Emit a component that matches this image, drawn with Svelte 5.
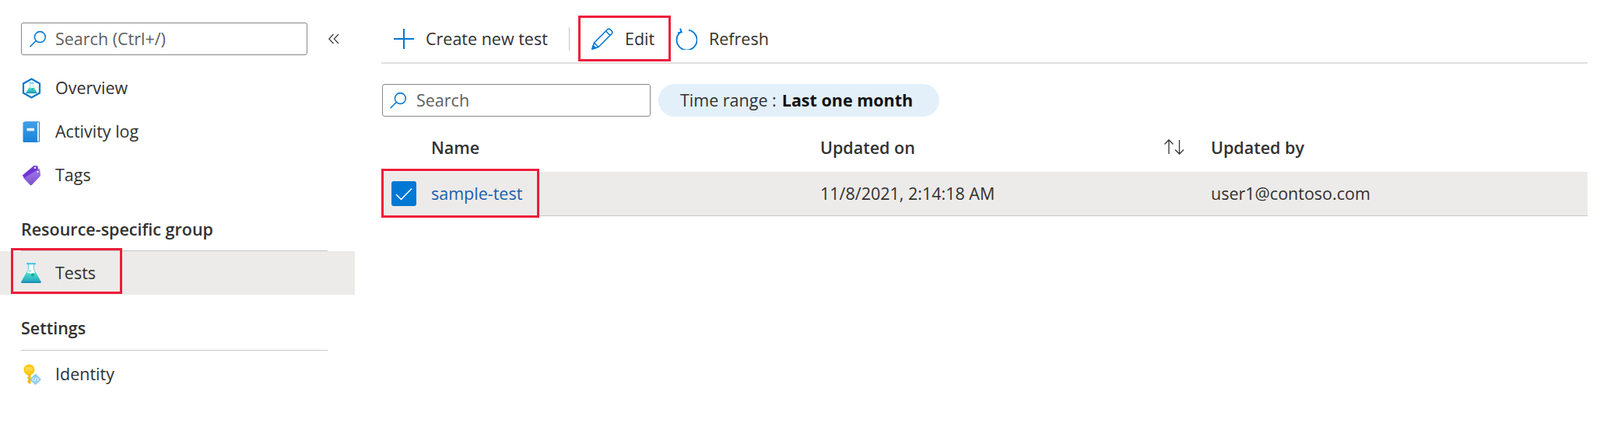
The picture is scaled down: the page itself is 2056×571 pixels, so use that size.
<script lang="ts">
  const topItems = [
    { label: "Overview", icon: "overview" },
    { label: "Activity log", icon: "log" },
    { label: "Tags", icon: "tags" },
  ];
</script>

{#snippet searchIcon()}
  <svg class="search-icon" viewBox="0 0 24 24" fill="none" stroke="#0078d4" stroke-width="1.7">
    <circle cx="14.6" cy="9.4" r="7.6" />
    <path d="M9 14.8 1.2 22.6" stroke-linecap="round" />
  </svg>
{/snippet}

{#snippet flask(x: number, y: number, s: number)}
  <g transform="translate({x} {y}) scale({s})">
    <path d="M9.500 1.500h7v7.500L25.300 24c.4.800-.1 1.500-.9 1.500H1.600c-.8 0-1.300-.7-.9-1.500L9.500 9z" fill="#fff" stroke="#62cbe6" stroke-width="1" />
    <path d="M7 12.500c4 1.500 8 1.500 12 0L25.300 24c.4.800-.1 1.500-.9 1.500H1.600c-.8 0-1.300-.7-.9-1.500z" fill="url(#flaskFill)" />
    <rect x="7" y="0" width="12" height="2.200" rx=".6" fill="#4fc4e6" />
    <rect x="0.500" y="24" width="25" height="2" fill="#1c8fb4" />
    <circle cx="15" cy="15.500" r="1.900" fill="#19a896" />
    <circle cx="11.500" cy="10.500" r="1.200" fill="#7fdcd2" />
  </g>
{/snippet}

{#snippet navIcon(kind: string)}
  {#if kind === "overview"}
    <svg class="nav-icon" viewBox="0 0 25 27">
      <defs>
        <linearGradient id="flaskFill" x1="0" y1="0" x2="0" y2="1">
          <stop offset="0" stop-color="#4fe0cc" />
          <stop offset="1" stop-color="#1f9fc0" />
        </linearGradient>
      </defs>
      <path d="M12.500 1.500 23 7.500v12L12.500 25.500 2 19.500v-12z" fill="#fff" stroke="#0a78cc" stroke-width="2.200" />
      {@render flask(5.500, 6, 0.54)}
    </svg>
  {:else if kind === "log"}
    <svg class="nav-icon" viewBox="0 0 25 27">
      <defs>
        <linearGradient id="bookFill" x1="0" y1="0" x2="0" y2="1">
          <stop offset="0" stop-color="#3d9fe8" />
          <stop offset="1" stop-color="#1b82d8" />
        </linearGradient>
      </defs>
      <path d="M4 .8h18.500v25.400H4z" fill="#e6f2fb" stroke="#1b82d8" stroke-width="1" />
      <path d="M3 .8h16c.6 0 1 .4 1 1v24.400c0 .6-.4 1-1 1H3c-.8 0-1.500-.7-1.500-1.500V2.300C1.500 1.500 2.200.8 3 .8z" fill="url(#bookFill)" />
      <rect x="6.500" y="8.800" width="9.500" height="3.600" fill="#e8f3fb" />
    </svg>
  {:else if kind === "tags"}
    <svg class="nav-icon" viewBox="0 0 25 27">
      <defs>
        <linearGradient id="tagFill" x1="0" y1="0" x2="0" y2="1">
          <stop offset="0" stop-color="#a67af4" />
          <stop offset="1" stop-color="#7c52c8" />
        </linearGradient>
      </defs>
      <path d="M8 10 18 4.500l5.200.8.800 8c0 .6-.1 1-.5 1.500L12.800 26c-.6.600-1.400.600-2 0L2 16.800z" fill="url(#tagFill)" />
      <path d="M.8 13.500 15 1.500c.5-.4 1-.5 1.500-.4l4 .4.500 4.500L3 16.800z" fill="#7034d6" />
      <circle cx="17" cy="3.800" r="1.700" fill="#efe6fb" stroke="#5a2ca8" stroke-width=".6" />
      <circle cx="20.500" cy="9" r="1.800" fill="#efe6fb" stroke="#5a2ca8" stroke-width=".6" />
    </svg>
  {:else if kind === "tests"}
    <svg class="nav-icon wide" viewBox="0 0 26 26">
      {@render flask(0, 0, 1)}
    </svg>
  {:else if kind === "identity"}
    <svg class="nav-icon" viewBox="0 0 25 27">
      <circle cx="9.500" cy="7.500" r="7" fill="#fdc916" />
      <rect x="5" y="4.800" width="9" height="1.200" fill="#ffe680" />
      <rect x="5" y="7.200" width="9" height="1.200" fill="#ffe680" />
      <path d="M7.500 13h4v12.500H9.500l-2-2v-2l1.500-1.200-1.500-1.300v-2l1.500-1.200-1.500-1.200z" fill="#f5b800" />
      <path d="M17.500 13 24.500 20 17.500 26.800 10.500 20z" fill="#8fd0f0" stroke="#5db0de" stroke-width=".6" />
      <path d="M15.500 18l-2 2 2 2M19.500 18l2 2-2 2M18.200 17.500l-1.400 5" fill="none" stroke="#fff" stroke-width="1" />
    </svg>
  {/if}
{/snippet}

<div class="page">
  <aside class="sidebar">
    <div class="side-search-row">
      <label class="search-box side">
        {@render searchIcon()}
        <span>Search (Ctrl+/)</span>
      </label>
      <svg class="collapse" viewBox="0 0 14 14" fill="none" stroke="#323130" stroke-width="1.100">
        <path d="M6.500 1 .8 7l5.700 6M13 1 7.300 7l5.700 6" />
      </svg>
    </div>

    <nav class="top-nav">
      {#each topItems as item}
        <div class="nav-item">
          {@render navIcon(item.icon)}
          <span>{item.label}</span>
        </div>
      {/each}
    </nav>

    <h3 class="group">Resource-specific group</h3>
    <div class="nav-item selected">
      <div class="highlight tests-mark"></div>
      {@render navIcon("tests")}
      <span>Tests</span>
    </div>

    <h3 class="group settings">Settings</h3>
    <div class="nav-item">
      {@render navIcon("identity")}
      <span>Identity</span>
    </div>
  </aside>

  <main class="content">
    <div class="toolbar">
      <button class="tool create">
        <svg class="plus" viewBox="0 0 26 26" fill="none" stroke="#0078d4" stroke-width="2"><path d="M13 0v26M0 13h26" /></svg>
        <span>Create new test</span>
      </button>
      <div class="sep"></div>
      <button class="tool edit">
        <div class="highlight edit-mark"></div>
        <svg viewBox="0 0 28 28" fill="none" stroke="#0078d4" stroke-width="1.600" stroke-linejoin="round">
          <path d="M1 27l2.500-8L20.500 2c1-1 2.500-1 3.700 0l1.800 1.800c1 1.100 1 2.600 0 3.700L9 24.500z" />
          <path d="M3.500 19 9 24.500M18.500 4l5.500 5.500" />
          <path d="M1 27l1.300-4.500 3.200 3.200z" fill="#0078d4" />
        </svg>
        <span>Edit</span>
      </button>
      <button class="tool refresh">
        <svg viewBox="0 0 28 28" fill="none" stroke="#0078d4" stroke-width="1.800">
          <path d="M7 4.800A13 13 0 1 0 17 2.600" />
          <path d="M6 .6l1.800 4.700-4.800 1" />
        </svg>
        <span>Refresh</span>
      </button>
    </div>

    <div class="filters">
      <label class="search-box main-search">
        {@render searchIcon()}
        <span>Search</span>
      </label>
      <div class="pill">Time range : <b>Last one month</b></div>
    </div>

    <div class="table">
      <div class="row head">
        <div class="cell-check"></div>
        <div>Name</div>
        <div class="sorted">
          <span>Updated on</span>
          <svg viewBox="0 0 28 20" fill="none" stroke="#333" stroke-width="1.300">
            <path d="M7 19V1M1.500 6.500 7 1l5.500 5.500M20.500 1v18M15 13.500l5.500 5.500 5.500-5.500" />
          </svg>
        </div>
        <div>Updated by</div>
      </div>
      <div class="row body">
        <div class="highlight row-mark"></div>
        <div class="cell-check">
          <div class="check">
            <svg viewBox="0 0 32 32" fill="none" stroke="#fff" stroke-width="1.500"><path d="M6 17l6.500 6.500L26 9.500" /></svg>
          </div>
        </div>
        <div class="cell link">sample-test</div>
        <div class="cell">11/8/2021, 2:14:18 AM</div>
        <div class="cell">user1@contoso.com</div>
      </div>
    </div>
  </main>
</div>

<style>
  :global(body) {
    background: #fff;
    color: #323130;
    font-family: "Open Sans", "Noto Sans", "Liberation Sans", sans-serif;
    font-size: 21.5px;
    overflow: hidden;
  }

  .page {
    display: flex;
    align-items: flex-start;
    height: 571px;
  }

  .sidebar {
    flex: 0 0 456px;
    padding-top: 29px;
  }

  .side-search-row {
    display: flex;
    align-items: center;
    padding-left: 27px;
  }

  .search-box {
    display: flex;
    align-items: center;
    box-sizing: border-box;
    height: 42px;
    border: 1px solid #8a8886;
    border-radius: 3px;
    color: #605e5c;
  }

  .search-box span {
    padding-bottom: 2px;
  }

  .search-box.side {
    width: 368px;
  }

  .search-icon {
    width: 22px;
    height: 22px;
    margin: 0 11px 0 10px;
    flex: none;
  }

  .collapse {
    width: 14px;
    height: 14px;
    margin-left: 27px;
  }

  .top-nav {
    margin-top: 14px;
  }

  .nav-item {
    position: relative;
    display: flex;
    align-items: center;
    height: 56px;
    padding-left: 28px;
  }

  .nav-item span {
    margin-left: 18px;
    padding-bottom: 2px;
  }

  .nav-icon {
    width: 25px;
    height: 27px;
    flex: none;
  }

  .nav-icon.wide {
    width: 26px;
    height: 26px;
    margin-left: -1px;
  }

  .nav-item.selected {
    background: #edebe9;
  }

  .group {
    box-sizing: border-box;
    width: 394px;
    height: 70px;
    margin: 0 0 0 27px;
    padding-top: 28px;
    border-bottom: 1px solid #c8c6c6;
    font-size: 21.5px;
    font-weight: 600;
    line-height: 28px;
  }

  .group.settings {
    height: 72px;
    padding-top: 29px;
    margin-bottom: 2px;
  }

  .highlight {
    position: absolute;
    box-sizing: border-box;
    border: 3px solid #ee1c3b;
    pointer-events: none;
  }

  .tests-mark {
    left: 14px;
    top: -4px;
    width: 143px;
    height: 59px;
  }

  .content {
    flex: 1;
    min-width: 0;
    margin: 0 16px 0 34px;
  }

  .toolbar {
    display: flex;
    align-items: center;
    height: 82px;
    box-sizing: border-box;
    border-bottom: 2px solid #e1dfdd;
    padding-top: 20px;
    padding-bottom: 1px;
  }

  .tool {
    position: relative;
    display: flex;
    align-items: center;
    background: none;
    border: 0;
    padding: 0;
    color: inherit;
    font: inherit;
  }

  .tool svg {
    width: 28px;
    height: 28px;
    flex: none;
  }

  .tool span {
    margin-left: 15px;
  }

  .tool svg.plus {
    width: 26px;
    height: 26px;
  }

  .create {
    margin-left: 16px;
    width: 225px;
  }

  .sep {
    width: 1px;
    height: 30px;
    background: #c8c6c4;
  }

  .edit {
    width: 119px;
    height: 59px;
    margin-left: 11px;
    padding-left: 17px;
    box-sizing: border-box;
  }

  .edit-mark {
    inset: 0;
  }

  .refresh {
    margin-left: 6px;
  }

  .filters {
    display: flex;
    align-items: center;
    gap: 10px;
    margin-top: 26px;
    padding-left: 1px;
  }

  .main-search {
    width: 345px;
  }

  .main-search .search-icon {
    margin: 0 12px 0 9px;
  }

  .pill {
    display: flex;
    align-items: center;
    gap: 7px;
    height: 42px;
    box-sizing: border-box;
    padding: 0 0 2px 28px;
    width: 361px;
    border-radius: 21px;
    background: #e3f0fa;
  }

  .pill b {
    color: #111;
    font-weight: 700;
  }

  .row {
    position: relative;
    display: grid;
    grid-template-columns: 64px 500px 502px 1fr;
    align-items: center;
  }

  .head {
    height: 71px;
    box-sizing: border-box;
    padding-top: 7px;
    font-weight: 600;
  }

  .sorted {
    display: flex;
    align-items: center;
    justify-content: space-between;
    padding-right: 33px;
  }

  .sorted svg {
    width: 28px;
    height: 20px;
  }

  .body {
    height: 57px;
    background: #edebe9;
    border-bottom: 1px solid #c8c6c6;
    box-sizing: border-box;
  }

  .cell {
    padding-bottom: 2px;
  }

  .row-mark {
    left: 0;
    top: -4px;
    width: 203px;
    height: 63px;
  }

  .cell-check {
    padding-left: 13px;
  }

  .check {
    width: 32px;
    height: 32px;
    border-radius: 3px;
    background: #0078d4;
  }

  .check svg {
    display: block;
    width: 32px;
    height: 32px;
  }

  .link {
    color: #1b5fae;
  }
</style>
